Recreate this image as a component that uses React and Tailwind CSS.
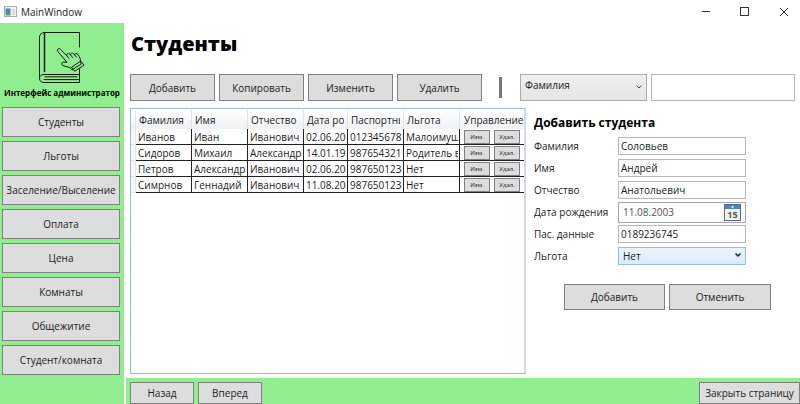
import React from "react";

const NAV = [
  "Студенты",
  "Льготы",
  "Заселение/Выселение",
  "Оплата",
  "Цена",
  "Комнаты",
  "Общежитие",
  "Студент/комната",
];

const COLUMNS = ["Фамилия", "Имя", "Отчество", "Дата рождения", "Паспортные данные", "Льгота"];

const ROWS = [
  ["Иванов", "Иван", "Иванович", "02.06.2003", "0123456789", "Малоимущий"],
  ["Сидоров", "Михаил", "Александрович", "14.01.1999", "9876543210", "Родитель военный"],
  ["Петров", "Александр", "Иванович", "02.06.2003", "9876501234", "Нет"],
  ["Симрнов", "Геннадий", "Иванович", "11.08.2003", "9876501234", "Нет"],
];

function Button({ className = "", children }) {
  return (
    <button
      type="button"
      className={`flex items-center justify-center whitespace-nowrap border border-[#808080] bg-[#dddddd] text-center ${className}`}
    >
      {children}
    </button>
  );
}

function Chevron({ className, strokeWidth }) {
  return (
    <svg viewBox="0 0 8 6" className={className} fill="none" stroke="currentColor" strokeWidth={strokeWidth}>
      <path d="M1.5 1.5 4 4l2.500-2.500" />
    </svg>
  );
}

function TitleBar() {
  return (
    <header className="flex h-[23px] items-center justify-between pr-[11px] pl-1">
      <div className="flex items-center gap-1">
        <svg viewBox="0 0 13 11" className="h-[11px] w-[13px]">
          <defs>
            <linearGradient id="pane" x1="0" y1="0" x2="0" y2="1">
              <stop offset="0" stopColor="#4f86b0" />
              <stop offset="1" stopColor="#46a878" />
            </linearGradient>
          </defs>
          <rect x="0.500" y="0.500" width="12" height="10" fill="#f4f4f4" stroke="#a9adb0" />
          <rect x="1.500" y="2.500" width="5" height="7" fill="url(#pane)" />
          <rect x="8" y="3" width="3" height="6" fill="#dcdcdc" />
        </svg>
        <span className="text-[10px] leading-4">MainWindow</span>
      </div>
      <div className="flex items-center gap-[29px]">
        <button type="button" aria-label="Свернуть">
          <svg viewBox="0 0 10 10" className="size-[10px]" stroke="#333" fill="none">
            <path d="M1 4.500h8" />
          </svg>
        </button>
        <button type="button" aria-label="Развернуть">
          <svg viewBox="0 0 10 10" className="size-[10px]" stroke="#333" fill="none">
            <rect x="0.500" y="0.500" width="8" height="8" />
          </svg>
        </button>
        <button type="button" aria-label="Закрыть">
          <svg viewBox="0 0 10 10" className="size-[10px]" stroke="#222" fill="none">
            <path d="M1 1l8 8M9 1 1 9" />
          </svg>
        </button>
      </div>
    </header>
  );
}

function BookLogo() {
  return (
    <svg
      viewBox="0 0 48 54"
      className="h-[54px] w-[48px]"
      fill="none"
      stroke="#0c1a0c"
      strokeWidth="1"
      strokeLinecap="round"
      strokeLinejoin="round"
    >
      <path d="M41.500 16V1.500H6.500C3.500 1.500 1.500 3.500 1.500 6.500V47" />
      <path d="M41.500 38v5.500H6C3.300 43.500 1.500 45 1.500 47.500S3.300 51.500 6 51.500h35.500v-8" />
      <path d="M6.500 1.500v39" strokeWidth="1.500" />
      <path d="M7 45.800h32M6 48.600h35" />
      <path
        fill="#90ee90"
        d="M31.500 36.500 25 34.600c-2-.7-1.700-3.600.6-3.500l3.400.2L19.800 20.500c-1.400-2 1-4 2.700-2.200l6.300 6.500c-.5-2 1.500-3.200 3-1.700l.8 1c-.3-2 1.800-2.800 3.100-1.300l1 1.200c0-1.700 2-2.200 3.200-.6 2 2.700 2.700 5 2.800 7.900l.3 1.800-8.500 5.500z"
      />
      <path d="m28.800 24.800 2.100 2.500M32.600 24.100l2 2.400M36.700 24l1.600 2M36.500 40l-3-3.800 9.300-6.200 3 3.800z" />
    </svg>
  );
}

function Sidebar() {
  return (
    <aside className="w-[124px] shrink-0 bg-[#90ee90] pt-2">
      <div className="flex justify-center">
        <BookLogo />
      </div>
      <p className="mt-px mb-[7px] whitespace-nowrap text-center text-[8px] font-bold leading-[14px] text-black">
        Интерфейс администратор
      </p>
      <nav className="flex flex-col gap-1 pr-1 pl-[2px]">
        {NAV.map((item) => (
          <Button key={item} className="h-[30px] w-full">
            {item}
          </Button>
        ))}
      </nav>
    </aside>
  );
}

function Toolbar() {
  return (
    <div className="flex items-center pr-[5px] pl-1">
      <div className="flex gap-1">
        {["Добавить", "Копировать", "Изменить", "Удалить"].map((item) => (
          <Button key={item} className="h-[27px] w-[85px]">
            {item}
          </Button>
        ))}
      </div>
      <span className="mr-[18px] ml-[17px] h-[21px] w-[3px] bg-[#77777c]" />
      <div className="relative">
        <select
          aria-label="Поле поиска"
          className="block h-[27px] w-[127px] appearance-none border border-[#acacac] bg-linear-to-b from-[#f0f0f0] to-[#e5e5e5] pb-[6px] pl-1"
        >
          <option>Фамилия</option>
        </select>
        <Chevron strokeWidth="1" className="pointer-events-none absolute top-[10px] right-1 h-[6px] w-2 text-[#444]" />
      </div>
      <input aria-label="Поиск" className="ml-1 h-[27px] min-w-0 flex-1 border border-[#b4b6bc] bg-white px-1" />
    </div>
  );
}

function StudentsTable() {
  return (
    <section className="w-[396px] shrink-0 border border-[#9db9d6] border-r-2 border-r-[#cfdbe8] pt-px">
      <table className="w-full table-fixed border-separate border-spacing-0">
        <colgroup>
          <col className="w-[5px]" />
          <col className="w-[56px]" />
          <col className="w-[56px]" />
          <col className="w-[56px]" />
          <col className="w-[44px]" />
          <col className="w-[56px]" />
          <col className="w-[56px]" />
          <col />
        </colgroup>
        <thead>
          <tr className="h-[19px] bg-linear-to-b from-white to-[#f0f1f4]">
            <td className="border-r border-[#e2e4e8] p-0" />
            {COLUMNS.map((title) => (
              <th key={title} scope="col" className="border-r border-[#dfe2e8] p-0 pr-[3px] pl-[3px] text-left font-normal">
                <div className="overflow-hidden whitespace-nowrap">{title}</div>
              </th>
            ))}
            <th scope="col" className="p-0 pl-1 text-left font-normal">
              <div className="overflow-hidden whitespace-nowrap">Управление</div>
            </th>
          </tr>
        </thead>
        <tbody>
          {ROWS.map((row) => (
            <tr key={row[0]} className="h-4">
              <td className="border-r border-b border-[#e2e4e8] bg-[#f5f6f8] p-0" />
              {row.map((value, i) => (
                <td key={i} className="border-r border-b border-[#222] p-0 pr-px pl-[2px]">
                  <div className="overflow-hidden whitespace-nowrap">{value}</div>
                </td>
              ))}
              <td className="border-b border-[#222] p-0">
                <div className="flex gap-1 pl-1 text-[6px] leading-[10px]">
                  <Button className="h-[14px] w-[26px]">Изм.</Button>
                  <Button className="h-[14px] w-[26px]">Удал.</Button>
                </div>
              </td>
            </tr>
          ))}
        </tbody>
      </table>
    </section>
  );
}

function CalendarIcon() {
  return (
    <svg viewBox="0 0 17 17" className="h-[17px] w-[17px]">
      <rect x="0.500" y="0.500" width="16" height="16" fill="#f3f3f3" stroke="#5c6874" />
      <rect x="1" y="1" width="15" height="4" fill="#4f87c4" />
      <circle cx="8.500" cy="3" r="1" fill="#fff" />
      <text x="8.500" y="13.500" textAnchor="middle" fontSize="9" fontWeight="700" fill="#555">
        15
      </text>
    </svg>
  );
}

function TextRow({ id, label, value }) {
  return (
    <div className="flex h-[22px] items-center">
      <label htmlFor={id} className="w-[84px]">
        {label}
      </label>
      <input id={id} defaultValue={value} className="h-[18px] w-[128px] border border-[#b4b6bc] bg-white px-[2px]" />
    </div>
  );
}

function StudentForm() {
  return (
    <form className="flex-1 pt-[5px] pl-2">
      <h2 className="mb-[3px] text-[12px] font-bold leading-[19px] text-black">Добавить студента</h2>
      <TextRow id="surname" label="Фамилия" value="Соловьев" />
      <TextRow id="name" label="Имя" value="Андрей" />
      <TextRow id="patronymic" label="Отчество" value="Анатольевич" />
      <div className="flex h-[22px] items-center">
        <label htmlFor="birth" className="w-[84px]">
          Дата рождения
        </label>
        <div className="flex h-[21px] w-[128px] items-center border border-[#9aa9b8] bg-white pr-1">
          <input id="birth" defaultValue="11.08.2003" className="min-w-0 flex-1 pl-1 text-[#555]" />
          <button type="button" aria-label="Открыть календарь">
            <CalendarIcon />
          </button>
        </div>
      </div>
      <TextRow id="passport" label="Пас. данные" value="0189236745" />
      <div className="flex h-[22px] items-center">
        <label htmlFor="benefit" className="w-[84px]">
          Льгота
        </label>
        <div className="relative">
          <select
            id="benefit"
            className="block h-[18px] w-[128px] appearance-none border border-[#8fbfe8] bg-linear-to-b from-[#ebf4fc] to-[#dcecfc] pl-1"
          >
            <option>Нет</option>
          </select>
          <Chevron strokeWidth="1.500" className="pointer-events-none absolute top-[5px] right-1 h-[6px] w-2 text-[#222]" />
        </div>
      </div>
      <div className="mt-[17px] ml-[30px] flex gap-1">
        <Button className="h-[26px] w-[101px]">Добавить</Button>
        <Button className="h-[26px] w-[102px]">Отменить</Button>
      </div>
    </form>
  );
}

export default function App() {
  return (
    <div className="flex min-h-screen flex-col bg-white font-['Open_Sans','Noto_Sans',sans-serif] text-[10px] leading-[14px] text-[#1c1c1c]">
      <TitleBar />
      <div className="flex flex-1">
        <Sidebar />
        <div className="ml-[2px] flex min-w-0 flex-1 flex-col">
          <h1 className="mt-[6px] mb-[15px] pl-[5px] text-[20px] font-extrabold leading-[30px] text-black">Студенты</h1>
          <Toolbar />
          <main className="mt-[7px] mb-1 flex flex-1 pl-1">
            <StudentsTable />
            <StudentForm />
          </main>
          <footer className="flex h-[26px] items-center gap-1 bg-[#90ee90] pt-[3px] pl-1">
            <Button className="h-[22px] w-[64px]">Назад</Button>
            <Button className="h-[22px] w-[64px]">Вперед</Button>
            <Button className="ml-auto h-[22px] w-[101px]">Закрыть страницу</Button>
          </footer>
        </div>
      </div>
    </div>
  );
}
